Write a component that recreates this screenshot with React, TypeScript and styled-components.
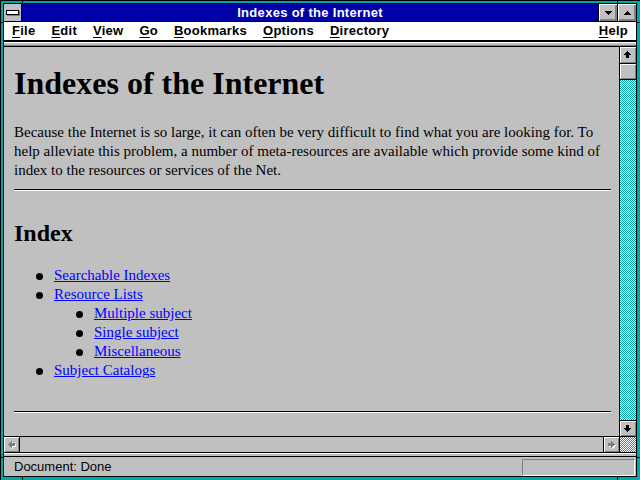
import React from 'react'
import styled, { createGlobalStyle } from 'styled-components'

const TEAL = '#00a8a8'
const NAVY = '#0000a8'
const GRAY = '#c0c0c0'
const SHADOW = '#808080'

const GlobalStyle = createGlobalStyle`
  html, body {
    margin: 0;
    padding: 0;
    overflow: hidden;
    background: ${TEAL};
  }
  #root {
    width: 640px;
    height: 480px;
    overflow: hidden;
  }
`

const bevel = `
  box-shadow: inset 1px 1px #fff, inset -1px -1px ${SHADOW};
`

const Frame = styled.div`
  position: relative;
  box-sizing: border-box;
  width: 641px;
  height: 481px;
  border: 1px solid #000;
  background: ${TEAL};
  padding: 2px 3px 3px 2px;
`
const Notch = styled.span<{ $side: 'top' | 'bottom' | 'left' | 'right'; $at: number }>(
  ({ $side, $at }) => {
    const across = $side === 'top' || $side === 'bottom'
    return `
      position: absolute;
      background: #000;
      ${across ? `left: ${$at}px; width: 1px; height: ${$side === 'top' ? 2 : 3}px;` : `top: ${$at}px; height: 1px; width: ${$side === 'left' ? 2 : 3}px;`}
      ${$side === 'top' ? 'top: 0;' : ''}
      ${$side === 'bottom' ? 'bottom: 0;' : ''}
      ${$side === 'left' ? 'left: 0;' : ''}
      ${$side === 'right' ? 'right: 0;' : ''}
    `
  }
)
const Inner = styled.div`
  box-sizing: border-box;
  height: 100%;
  border: 1px solid #000;
  background: ${GRAY};
  display: flex;
  flex-direction: column;
  font-family: "Liberation Sans", Arial, sans-serif;
`

const TitleBar = styled.div`
  flex: none;
  display: flex;
  height: 17px;
  border-bottom: 1px solid #000;
`
const SysBox = styled.div`
  width: 17px;
  border-right: 1px solid #000;
  background: ${GRAY};
  display: flex;
  align-items: center;
  justify-content: center;
`
const SysBar = styled.div`
  width: 11px;
  height: 3px;
  border: 1px solid #000;
  background: #fff;
  box-shadow: 1px 1px ${SHADOW};
`
const Caption = styled.div`
  flex: 1;
  background: ${NAVY};
  color: #fff;
  font-weight: bold;
  font-size: 13px;
  letter-spacing: 0.3px;
  line-height: 17px;
  text-align: center;
  white-space: nowrap;
`
const CaptionButton = styled.div`
  width: 18px;
  border-left: 1px solid #000;
  background: ${GRAY};
  box-shadow: inset 1px 1px #fff, inset -1px -1px ${SHADOW}, inset -2px -2px ${SHADOW};
  display: flex;
  align-items: center;
  justify-content: center;
`

const MenuBar = styled.div`
  flex: none;
  display: flex;
  height: 18px;
  background: #fff;
  border-bottom: 2px solid #000;
`
const MenuItem = styled.span<{ $right?: boolean }>(
  ({ $right }) => `
    padding: 0 8px;
    font-size: 13px;
    font-weight: bold;
    letter-spacing: 0.25px;
    line-height: 18px;
    color: #000;
    white-space: nowrap;
    ${$right ? 'margin-left: auto;' : ''}
    u {
      text-underline-offset: 2px;
    }
  `
)

const Strip = styled.div<{ $dark?: boolean }>(
  ({ $dark }) => `
    flex: none;
    height: 2px;
    background: ${GRAY};
    border-top: 1px solid #fff;
    border-bottom: 1px solid ${$dark ? '#000' : SHADOW};
  `
)

const Viewport = styled.div`
  flex: none;
  display: flex;
  height: 405px;
  border-top: 1px solid #000;
  border-bottom: 1px solid #000;
`
const Main = styled.div`
  flex: 1;
  min-width: 0;
  display: flex;
  flex-direction: column;
`
const Content = styled.div`
  flex: 1;
  min-height: 0;
  overflow: hidden;
  padding: 0 8px 0 10px;
  background: ${GRAY};
  color: #000;
  font-family: "Liberation Serif", "Times New Roman", serif;
`
const Heading = styled.h1`
  margin: 18px 0 0;
  font-size: 32px;
  line-height: 36px;
  font-weight: bold;
`
const Paragraph = styled.p`
  margin: 22px 0 0;
  font-size: 15px;
  line-height: 19px;
`
const Rule = styled.hr<{ $gap: number }>(
  ({ $gap }) => `
    margin: ${$gap}px 0 0;
    height: 0;
    border: 0;
    border-top: 1px solid #000;
    border-bottom: 1px solid #fff;
  `
)
const SubHeading = styled.h2`
  margin: 28px 0 0;
  font-size: 24px;
  line-height: 28px;
  font-weight: bold;
`
const List = styled.ul<{ $nested?: boolean }>(
  ({ $nested }) => `
    list-style: none;
    margin: ${$nested ? 0 : 19}px 0 0;
    padding: 0 0 0 ${$nested ? 40 : 0}px;
  `
)
const Item = styled.li`
  font-size: 15px;
  line-height: 19px;
`
const Line = styled.div`
  display: flex;
  align-items: center;
`
const Bullet = styled.span`
  flex: none;
  width: 7px;
  height: 7px;
  margin: 1px 11px 0 22px;
  border-radius: 50%;
  background: #000;
`
const Link = styled.a`
  color: #0000ff;
  text-decoration: underline;
`

const HScroll = styled.div`
  flex: none;
  display: flex;
  height: 15px;
  border-top: 1px solid #000;
  background: ${GRAY};
`
const ArrowButton = styled.div<{ $edge: 'left' | 'right' | 'top' | 'bottom' | 'both'; $size?: number }>(
  ({ $edge, $size = 15 }) => `
    flex: none;
    ${$edge === 'left' || $edge === 'right' ? `width: ${$size}px;` : `height: ${$size}px;`}
    ${$edge === 'left' ? 'border-right: 1px solid #000;' : ''}
    ${$edge === 'right' ? 'border-left: 1px solid #000;' : ''}
    ${$edge === 'top' ? 'border-bottom: 1px solid #000;' : ''}
    ${$edge === 'bottom' || $edge === 'both' ? 'border-top: 1px solid #000;' : ''}
    ${$edge === 'both' ? 'border-bottom: 1px solid #000;' : ''}
    background: ${GRAY};
    ${bevel}
    display: flex;
    align-items: center;
    justify-content: center;
  `
)
const HTrack = styled.div`
  flex: 1;
`
const VScroll = styled.div`
  flex: none;
  width: 16px;
  border-left: 1px solid #000;
  display: flex;
  flex-direction: column;
`
const Thumb = styled.div`
  flex: none;
  height: 15px;
  border-bottom: 1px solid #000;
  background: ${GRAY};
  ${bevel}
`
const VTrack = styled.div<{ $fixed?: number }>(
  ({ $fixed }) => `
    ${$fixed ? `flex: none; height: ${$fixed}px;` : 'flex: 1;'}
    overflow: hidden;
    line-height: 0;
    svg {
      display: block;
    }
  `
)

const StatusBar = styled.div`
  flex: none;
  box-sizing: border-box;
  height: 19px;
  display: flex;
  justify-content: space-between;
  padding: 1px 1px 0 10px;
`
const StatusText = styled.span`
  font-size: 13px;
  line-height: 17px;
  color: #000;
`
const StatusBox = styled.div`
  align-self: flex-end;
  width: 111px;
  height: 15px;
  border-top: 1px solid ${SHADOW};
  border-left: 1px solid ${SHADOW};
  border-bottom: 1px solid #fff;
  border-right: 1px solid #fff;
`

const arrows = {
  up: 'M3 0H4V1H5V2H6V3H7V4H5V7H2V4H0V3H1V2H2V1H3Z',
  down: 'M2 0H5V3H7V4H6V5H5V6H4V7H3V6H2V5H1V4H0V3H2Z',
  left: 'M7 2H4V0H3V1H2V2H1V3H0V4H1V5H2V6H3V7H4V5H7Z',
  right: 'M0 2H3V0H4V1H5V2H6V3H7V4H6V5H5V6H4V7H3V5H0Z'
}
type Dir = keyof typeof arrows

const Arrow = ({ dir, disabled = false }: { dir: Dir; disabled?: boolean }) => (
  <svg width="8" height="8" viewBox="0 0 8 8" shapeRendering="crispEdges">
    {disabled && <path d={arrows[dir]} fill="#fff" transform="translate(1 1)" />}
    <path d={arrows[dir]} fill={disabled ? SHADOW : '#000'} />
  </svg>
)

const Triangle = ({ up }: { up?: boolean }) => (
  <svg width="7" height="4" viewBox="0 0 7 4" shapeRendering="crispEdges">
    <path
      d={up ? 'M3 0H4V1H5V2H6V3H7V4H0V3H1V2H2V1H3Z' : 'M0 0H7V1H6V2H5V3H4V4H3V3H2V2H1V1H0Z'}
      fill="#000"
    />
  </svg>
)

// 1px checker of teal and white, the scrollbar track colour of this scheme
const Dither = ({ id }: { id: string }) => (
  <svg width="16" height="400" shapeRendering="crispEdges">
    <defs>
      <pattern id={id} width="2" height="2" patternUnits="userSpaceOnUse">
        <rect width="2" height="2" fill="#fff" />
        <rect width="1" height="1" fill={TEAL} />
        <rect x="1" y="1" width="1" height="1" fill={TEAL} />
      </pattern>
    </defs>
    <rect width="16" height="400" fill={`url(#${id})`} />
  </svg>
)

const menus = [
  ['F', 'ile'],
  ['E', 'dit'],
  ['V', 'iew'],
  ['G', 'o'],
  ['B', 'ookmarks'],
  ['O', 'ptions'],
  ['D', 'irectory']
]

const App = () => {
  return (
    <>
      <GlobalStyle />
      <Frame>
        <Notch $side="top" $at={21} />
        <Notch $side="top" $at={616} />
        <Notch $side="bottom" $at={21} />
        <Notch $side="bottom" $at={616} />
        <Notch $side="left" $at={21} />
        <Notch $side="left" $at={456} />
        <Notch $side="right" $at={21} />
        <Notch $side="right" $at={456} />
        <Inner>
          <TitleBar>
            <SysBox>
              <SysBar />
            </SysBox>
            <Caption>Indexes of the Internet</Caption>
            <CaptionButton>
              <Triangle />
            </CaptionButton>
            <CaptionButton>
              <Triangle up />
            </CaptionButton>
          </TitleBar>
          <MenuBar>
            {menus.map(([key, rest]) => (
              <MenuItem key={key}>
                <u>{key}</u>
                {rest}
              </MenuItem>
            ))}
            <MenuItem $right>
              <u>H</u>elp
            </MenuItem>
          </MenuBar>
          <Strip />
          <Viewport>
            <Main>
              <Content>
                <Heading>Indexes of the Internet</Heading>
                <Paragraph>
                  Because the Internet is so large, it can often be very difficult to find what you are
                  looking for. To help alleviate this problem, a number of meta-resources are available
                  which provide some kind of index to the resources or services of the Net.
                </Paragraph>
                <Rule $gap={9} />
                <SubHeading>Index</SubHeading>
                <List>
                  <Item>
                    <Line>
                      <Bullet />
                      <Link href="#">Searchable Indexes</Link>
                    </Line>
                  </Item>
                  <Item>
                    <Line>
                      <Bullet />
                      <Link href="#">Resource Lists</Link>
                    </Line>
                    <List $nested>
                      {['Multiple subject', 'Single subject', 'Miscellaneous'].map((label) => (
                        <Item key={label}>
                          <Line>
                            <Bullet />
                            <Link href="#">{label}</Link>
                          </Line>
                        </Item>
                      ))}
                    </List>
                  </Item>
                  <Item>
                    <Line>
                      <Bullet />
                      <Link href="#">Subject Catalogs</Link>
                    </Line>
                  </Item>
                </List>
                <Rule $gap={31} />
              </Content>
              <HScroll>
                <ArrowButton $edge="left">
                  <Arrow dir="left" disabled />
                </ArrowButton>
                <HTrack />
                <ArrowButton $edge="right">
                  <Arrow dir="right" disabled />
                </ArrowButton>
              </HScroll>
            </Main>
            <VScroll>
              <ArrowButton $edge="top" $size={16}>
                <Arrow dir="up" />
              </ArrowButton>
              <Thumb />
              <VTrack>
                <Dither id="track" />
              </VTrack>
              <ArrowButton $edge="both">
                <Arrow dir="down" />
              </ArrowButton>
              <VTrack $fixed={15}>
                <Dither id="corner" />
              </VTrack>
            </VScroll>
          </Viewport>
          <Strip $dark />
          <StatusBar>
            <StatusText>Document: Done</StatusText>
            <StatusBox />
          </StatusBar>
        </Inner>
      </Frame>
    </>
  )
}

export default App
